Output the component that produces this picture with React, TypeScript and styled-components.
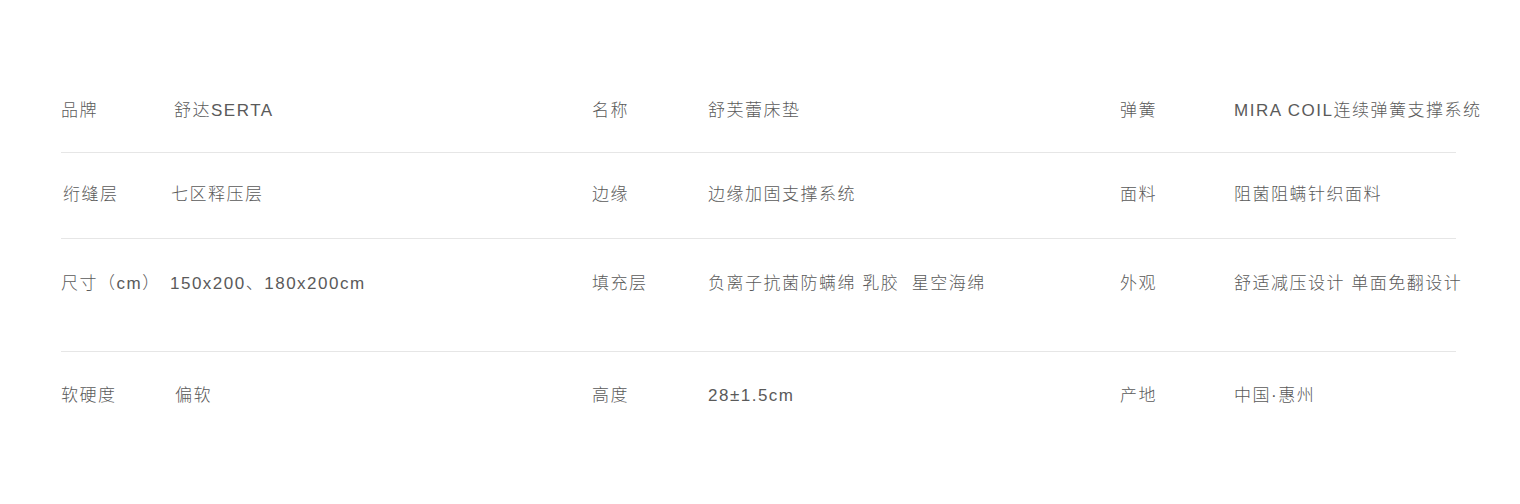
import React from "react";
import styled, { createGlobalStyle } from "styled-components";

const GlobalStyle = createGlobalStyle`
  html, body {
    margin: 0;
    padding: 0;
    background: #fff;
  }
  body {
    font-family: "Liberation Sans", "Noto Sans CJK SC", sans-serif;
  }
`;

const Page = styled.div`
  width: 1520px;
  height: 504px;
  box-sizing: border-box;
  padding: 67px 0 0 61px;
  overflow: hidden;
`;

const Table = styled.div`
  width: 1395px;
  display: flex;
  flex-direction: column;
`;

const Row = styled.div<{ $h: number; $pt: number; $last?: boolean }>`
  display: grid;
  grid-template-columns: 113px 418px 116px 412px 114px 222px;
  align-items: start;
  box-sizing: border-box;
  height: ${(p) => p.$h}px;
  padding-top: ${(p) => p.$pt}px;
  border-bottom: ${(p) => (p.$last ? "none" : "1px solid #e6e6e6")};
`;

const Cell = styled.div<{ $nudge?: number }>`
  font-size: 17px;
  line-height: 24px;
  font-weight: 300;
  letter-spacing: 1.5px;
  color: #5a5a5a;
  white-space: pre;
  margin-left: ${(p) => p.$nudge ?? 0}px;
`;

type Pair = { label: string; value: string; ln?: number; vn?: number };

const rows: { h: number; pt: number; cells: Pair[] }[] = [
  {
    h: 86,
    pt: 32,
    cells: [
      { label: "品牌", value: "舒达SERTA" },
      { label: "名称", value: "舒芙蕾床垫" },
      { label: "弹簧", value: "MIRA COIL连续弹簧支撑系统" },
    ],
  },
  {
    h: 86,
    pt: 30,
    cells: [
      { label: "绗缝层", value: "七区释压层", ln: 2, vn: -3 },
      { label: "边缘", value: "边缘加固支撑系统" },
      { label: "面料", value: "阻菌阻螨针织面料" },
    ],
  },
  {
    h: 113,
    pt: 33,
    cells: [
      { label: "尺寸（cm）", value: "150x200、180x200cm", vn: -4 },
      { label: "填充层", value: "负离子抗菌防螨绵 乳胶  星空海绵" },
      { label: "外观", value: "舒适减压设计 单面免翻设计" },
    ],
  },
  {
    h: 120,
    pt: 32,
    cells: [
      { label: "软硬度", value: "偏软", vn: 1 },
      { label: "高度", value: "28±1.5cm" },
      { label: "产地", value: "中国·惠州" },
    ],
  },
];

export default function App() {
  return (
    <Page>
      <GlobalStyle />
      <Table>
        {rows.map((r, i) => (
          <Row key={i} $h={r.h} $pt={r.pt} $last={i === rows.length - 1}>
            {r.cells.map((c) => (
              <React.Fragment key={c.label}>
                <Cell $nudge={c.ln}>{c.label}</Cell>
                <Cell $nudge={c.vn}>{c.value}</Cell>
              </React.Fragment>
            ))}
          </Row>
        ))}
      </Table>
    </Page>
  );
}
